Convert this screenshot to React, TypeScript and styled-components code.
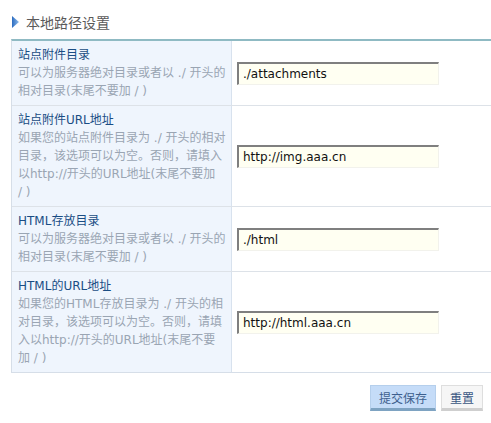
import React from 'react';
import styled, { createGlobalStyle } from 'styled-components';

const GlobalStyle = createGlobalStyle`
  body {
    margin: 0;
    background: #fff;
    font-family: "Noto Sans CJK SC", "DejaVu Sans", sans-serif;
  }
`;

const Page = styled.div`
  padding: 10px 0 0 11px;
`;

const Header = styled.div`
  display: flex;
  align-items: center;
  gap: 7px;
  height: 24px;
  margin: 0 0 5px 1px;
  font-size: 14px;
  color: #5a5a5a;
`;

const SettingsTable = styled.div`
  border-top: 2px solid #8fbac3;
  border-left: 1px solid #d6dee8;
  border-bottom: 1px solid #d6dee8;
`;

const Row = styled.div<{ $last?: boolean }>`
  display: grid;
  grid-template-columns: 220px 1fr;
  border-bottom: ${p => (p.$last ? 'none' : '1px solid #dde2e8')};
`;

const LabelCell = styled.div`
  background: #eff5fd;
  border-right: 1px solid #d8e2ee;
  padding: 5px 6px;
  font-family: "DejaVu Sans", "Noto Sans CJK SC", sans-serif;
  font-size: 12px;
  line-height: 18px;
  white-space: nowrap;
`;

const FieldTitle = styled.div`
  color: #1a4d84;
`;

const FieldDesc = styled.div`
  color: #9aa5b3;
`;

const FieldCell = styled.div`
  display: flex;
  align-items: center;
  padding-left: 5px;
`;

const TextInput = styled.input`
  box-sizing: border-box;
  width: 202px;
  height: 23px;
  padding: 0 4px;
  background: #fffff2;
  border-style: solid;
  border-width: 2px 1px 1px 2px;
  border-color: #7f7f7f #f2f2ec #f2f2ec #7f7f7f;
  font-family: "DejaVu Sans", sans-serif;
  font-size: 12px;
  color: #111;
  outline: none;
`;

const Actions = styled.div`
  display: flex;
  justify-content: flex-end;
  gap: 5px;
  padding: 12px 8px 0 0;
`;

const Button = styled.button<{ $primary?: boolean }>`
  height: 26px;
  padding: 0 8px;
  font-family: "Noto Sans CJK SC", sans-serif;
  font-size: 12px;
  cursor: pointer;
  background: ${p => (p.$primary ? '#c5dcf8' : '#f6f6f6')};
  color: ${p => (p.$primary ? '#3d5f8e' : '#3a5783')};
  border: 1px solid ${p => (p.$primary ? '#b5cfec' : '#dedede')};
  border-bottom: 3px solid ${p => (p.$primary ? '#7ea3c2' : '#cfcfcf')};
`;

const fields = [
  {
    title: '站点附件目录',
    desc: ['可以为服务器绝对目录或者以 ./ 开头的', '相对目录(末尾不要加 / )'],
    value: './attachments',
  },
  {
    title: '站点附件URL地址',
    desc: ['如果您的站点附件目录为 ./ 开头的相对', '目录，该选项可以为空。否则，请填入', '以http://开头的URL地址(末尾不要加', '/ )'],
    value: 'http://img.aaa.cn',
  },
  {
    title: 'HTML存放目录',
    desc: ['可以为服务器绝对目录或者以 ./ 开头的', '相对目录(末尾不要加 / )'],
    value: './html',
  },
  {
    title: 'HTML的URL地址',
    desc: ['如果您的HTML存放目录为 ./ 开头的相', '对目录，该选项可以为空。否则，请填', '入以http://开头的URL地址(末尾不要', '加 / )'],
    value: 'http://html.aaa.cn',
  },
];

function Arrow() {
  return (
    <svg width="7" height="12" viewBox="0 0 7 12">
      <defs>
        <linearGradient id="arr" x1="0" y1="0" x2="1" y2="0">
          <stop offset="0" stopColor="#2c6cc0" />
          <stop offset="1" stopColor="#8dbbeb" />
        </linearGradient>
      </defs>
      <polygon points="0,0 7,6 0,12" fill="url(#arr)" />
    </svg>
  );
}

export default function App() {
  return (
    <Page>
      <GlobalStyle />
      <Header>
        <Arrow />
        <span>本地路径设置</span>
      </Header>
      <SettingsTable>
        {fields.map((f, i) => (
          <Row key={f.title} $last={i === fields.length - 1}>
            <LabelCell>
              <FieldTitle>{f.title}</FieldTitle>
              {f.desc.map(line => (
                <FieldDesc key={line}>{line}</FieldDesc>
              ))}
            </LabelCell>
            <FieldCell>
              <TextInput defaultValue={f.value} />
            </FieldCell>
          </Row>
        ))}
      </SettingsTable>
      <Actions>
        <Button $primary>提交保存</Button>
        <Button>重置</Button>
      </Actions>
    </Page>
  );
}
